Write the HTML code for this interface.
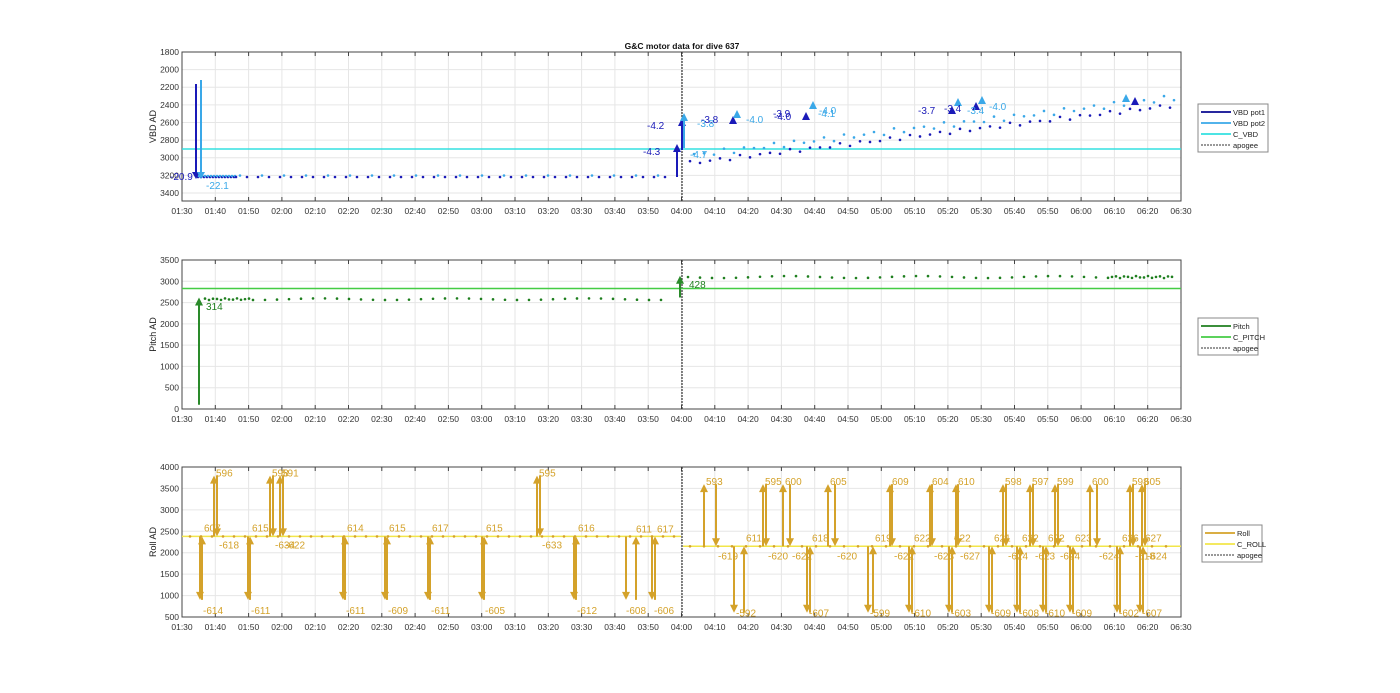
<!DOCTYPE html><html><head><meta charset="utf-8"><style>
html,body{margin:0;padding:0;background:#fff;width:1400px;height:693px;overflow:hidden}
svg{display:block;font-family:"Liberation Sans",Arial,sans-serif}
</style></head><body>
<svg id="s" width="1400" height="693" xmlns="http://www.w3.org/2000/svg"></svg>
<script>
var S=document.getElementById('s'),h='';
var X0=182,X1=1181;
function tx(m){return X0+m*(X1-X0)/300;}
var labs=[];for(var i=0;i<=30;i++){var mm=90+i*10;var hh=Math.floor(mm/60),mi=mm%60;labs.push('0'+hh+':'+(mi<10?'0':'')+mi);}
function axes(top,bot,ylabs,ylab){
 var w=X1-X0;
 for(var i=0;i<=30;i++){var x=X0+i*w/30;h+='<line x1="'+x+'" y1="'+top+'" x2="'+x+'" y2="'+bot+'" stroke="#e6e6e6" stroke-width="1"/>';
  h+='<line x1="'+x+'" y1="'+top+'" x2="'+x+'" y2="'+(top+4)+'" stroke="#444"/><line x1="'+x+'" y1="'+bot+'" x2="'+x+'" y2="'+(bot-4)+'" stroke="#444"/>';
  h+='<text x="'+x+'" y="'+(bot+13)+'" font-size="8.5" fill="#333" text-anchor="middle">'+labs[i]+'</text>';}
 ylabs.forEach(function(p){h+='<line x1="'+X0+'" y1="'+p[1]+'" x2="'+X1+'" y2="'+p[1]+'" stroke="#e6e6e6"/>';
  h+='<text x="'+(X0-3)+'" y="'+(p[1]+3)+'" font-size="8.5" fill="#333" text-anchor="end">'+p[0]+'</text>';});
 h+='<rect x="'+X0+'" y="'+top+'" width="'+w+'" height="'+(bot-top)+'" fill="none" stroke="#444" stroke-width="1"/>';
 var my=(top+bot)/2;h+='<text transform="translate(156,'+my+') rotate(-90)" font-size="9" fill="#222" text-anchor="middle">'+ylab+'</text>';
 h+='<line x1="682" y1="'+top+'" x2="682" y2="'+bot+'" stroke="#333" stroke-dasharray="2,1" stroke-width="1.2"/>';
}
function arrow(x,y1,y2,c){var d=y2>y1?1:-1;h+='<line x1="'+x+'" y1="'+y1+'" x2="'+x+'" y2="'+(y2-d*6)+'" stroke="'+c+'" stroke-width="2"/>';
 h+='<polygon points="'+(x-4)+','+(y2-d*8)+' '+(x+4)+','+(y2-d*8)+' '+x+','+y2+'" fill="'+c+'"/>';}
function txt(x,y,t,c,fs){h+='<text x="'+x+'" y="'+y+'" font-size="'+(fs||10)+'" fill="'+c+'">'+t+'</text>';}
function dot(x,y,c){h+='<circle cx="'+x+'" cy="'+y+'" r="1.3" fill="'+c+'"/>';}
// ---- plot 1
var y1=function(v){return 52+(v-1800)*0.0881;};
var yl=[];for(var v=1800;v<=3400;v+=200)yl.push([v,y1(v)]);
axes(52,201,yl,'VBD AD');
h+='<text x="682" y="49" font-size="8.5" font-weight="bold" text-anchor="middle" fill="#111">G&amp;C motor data for dive 637</text>';
var DB='#1a1ab8',LB='#3aa8e8',CY='#33e0e0';
h+='<line x1="'+X0+'" y1="149" x2="'+X1+'" y2="149" stroke="'+CY+'" stroke-width="1.5"/>';
for(var x=198;x<236;x+=3){dot(x,177,DB);dot(x+1,176,LB);}
for(var x=236;x<676;x+=11){dot(x,177,DB);if((x/11|0)%2)dot(x+4,175.5,LB);}
for(var x=690;x<1176;x+=10){var f=(x-690)/486;var yd=163-f*(163-105)+Math.sin(x)*2;dot(x,yd,DB);dot(x+4,yd-8+Math.cos(x)*2,LB);}
h+='<line x1="196" y1="84" x2="196" y2="172" stroke="'+DB+'" stroke-width="2"/><polygon points="192,172 200,172 196,179" fill="'+DB+'"/>';
h+='<line x1="201" y1="80" x2="201" y2="172" stroke="'+LB+'" stroke-width="2"/><polygon points="197,172 205,172 201,179" fill="'+LB+'"/>';
txt(170,180,'-20.9',DB);txt(206,189,'-22.1',LB);
arrow(677,177,144,DB);arrow(682,150,118,DB);arrow(684,148,113,LB);
txt(643,155,'-4.3',DB);txt(647,129,'-4.2',DB);txt(690,158,'-4.7',LB);
[[733,122,'-3.8',DB],[736,115,''],[767,124,'-4.0',LB],[778,118,'-3.9',DB],[808,118,'-4.1',LB],[812,112,''],[932,111,'-3.7',DB],[950,110,'-3.4',LB],[990,107,'-4.0',LB]].forEach(function(a){});
function tri(x,y,c){h+='<polygon points="'+(x-4)+','+(y+4)+' '+(x+4)+','+(y+4)+' '+x+','+(y-4)+'" fill="'+c+'"/>';}
tri(733,120,DB);tri(737,114,LB);tri(806,116,DB);tri(813,105,LB);tri(952,110,DB);tri(958,102,LB);tri(976,106,DB);tri(982,100,LB);tri(1135,101,DB);tri(1126,98,LB);
txt(697,127,'-3.8',LB);txt(701,123,'-3.8',DB);txt(746,123,'-4.0',LB);txt(773,117,'-3.9',DB);txt(774,120,'-4.0',DB);txt(818,117,'-4.1',LB);txt(819,114,'-4.0',LB);txt(918,114,'-3.7',DB);txt(944,112,'-3.4',DB);txt(967,114,'-3.4',LB);txt(989,110,'-4.0',LB);
// ---- plot 2
var y2=function(v){return 260+(3500-v)*149/3500;};
yl=[];for(var v=3500;v>=0;v-=500)yl.push([v,y2(v)]);
axes(260,409,yl,'Pitch AD');
var GD='#1f7f1f',GL='#44cc44';
h+='<line x1="'+X0+'" y1="'+y2(2830)+'" x2="'+X1+'" y2="'+y2(2830)+'" stroke="'+GL+'" stroke-width="1.5"/>';
for(var x=205;x<672;x+=(x<250?4:12))dot(x,y2(2580)+Math.sin(x)*0.8,GD);
for(var x=688;x<1176;x+=(x>1105?4:12))dot(x,y2(3100)+Math.sin(x)*1,GD);
arrow(199,y2(100),y2(2620),'#2a8a2a');arrow(680,y2(2620),y2(3130),'#2a8a2a');
txt(206,310,'314',GD);txt(689,288,'428',GD);
// ---- plot 3
var y3=function(v){return 467+(4000-v)*150/3500;};
yl=[];for(var v=4000;v>=500;v-=500)yl.push([v,y3(v)]);
axes(467,617,yl,'Roll AD');
var R='#d4a22a',RL='#f2e64a';
var L1=y3(2380),L2=y3(2150),TOP=y3(3800),BOT=y3(900),TOP2=y3(3600),BOT2=y3(600);
h+='<line x1="'+X0+'" y1="'+L1+'" x2="681" y2="'+L1+'" stroke="'+RL+'" stroke-width="1.5"/>';
h+='<line x1="683" y1="'+L2+'" x2="'+X1+'" y2="'+L2+'" stroke="'+RL+'" stroke-width="1.5"/>';
for(var x=190;x<680;x+=11)dot(x,L1,R);for(var x=690;x<1176;x+=14)dot(x,L2,R);
// pre
function dn(x,lab,ly){arrow(x,L1,BOT,R);txt(x+3,BOT+14,lab,R);}
function up(x,lab){arrow(x,L1,L1-0.1,R);}
[[200,'-614','607'],[248,'-611','615'],[343,'-611','614'],[385,'-609','615'],[428,'-611','617'],[482,'-605','615'],[574,'-612','616']].forEach(function(a){arrow(a[0],L1,BOT,R);txt(a[0]+3,BOT+14,a[1],R);arrow(a[0]+2,BOT,L1,R);txt(a[0]+4,L1-5,a[2],R);});
[[214,'596','-618'],[270,'598','-634'],[280,'591','-622'],[537,'595','-633']].forEach(function(a){arrow(a[0],L1,TOP,R);txt(a[0]+2,TOP+1,a[1],R);arrow(a[0]+3,TOP,L1,R);txt(a[0]+5,L1+12,a[2],R);});
arrow(626,L1,BOT,R);txt(626,BOT+14,'-608',R);arrow(636,BOT,L1,R);txt(636,L1-4,'611',R);
arrow(652,L1,BOT,R);txt(654,BOT+14,'-606',R);arrow(655,BOT,L1,R);txt(657,L1-4,'617',R);
// post
[[704,716,'593','-619'],[763,766,'595','-620'],[783,790,'600','-622'],[828,835,'605','-620'],[890,892,'609','-622'],[930,932,'604','-623'],[956,958,'610','-627'],[1003,1006,'598','-624'],[1030,1033,'597','-623'],[1055,1058,'599','-624'],[1090,1097,'600','-624'],[1130,1133,'598','-618'],[1142,1145,'605','-624']].forEach(function(a){arrow(a[0],L2,TOP2,R);txt(a[0]+2,TOP2+1,a[2],R);arrow(a[1],TOP2,L2,R);txt(a[1]+2,L2+13,a[3],R);});
[[734,744,'-592','611'],[807,810,'-607','618'],[868,873,'-599','619'],[909,912,'-610','622'],[949,952,'-603','622'],[989,992,'-609','621'],[1017,1020,'-608','622'],[1043,1046,'-610','622'],[1070,1073,'-609','623'],[1117,1120,'-602','626'],[1140,1143,'-607','627']].forEach(function(a){arrow(a[0],L2,BOT2,R);txt(a[0]+2,BOT2+4,a[2],R);arrow(a[1],BOT2,L2,R);txt(a[1]+2,L2-5,a[3],R);});
// legends
function legend(x,y,w,items){h+='<rect x="'+x+'" y="'+y+'" width="'+w+'" height="'+(items.length*11+4)+'" fill="#fff" stroke="#888"/>';
 items.forEach(function(it,i){var yy=y+8+i*11;h+='<line x1="'+(x+3)+'" y1="'+yy+'" x2="'+(x+33)+'" y2="'+yy+'" stroke="'+it[1]+'" stroke-width="'+(it[2]?1:1.8)+'"'+(it[2]?' stroke-dasharray="2,1"':'')+'/>';
 h+='<text x="'+(x+35)+'" y="'+(yy+3)+'" font-size="7.5" fill="#222">'+it[0]+'</text>';});}
legend(1198,104,70,[['VBD pot1','#0a0a90'],['VBD pot2',LB],['C_VBD',CY],['apogee','#333',1]]);
legend(1198,318,60,[['Pitch',GD],['C_PITCH',GL],['apogee','#333',1]]);
legend(1202,525,60,[['Roll',R],['C_ROLL',RL],['apogee','#333',1]]);
S.innerHTML=h;
</script>
</body></html>
